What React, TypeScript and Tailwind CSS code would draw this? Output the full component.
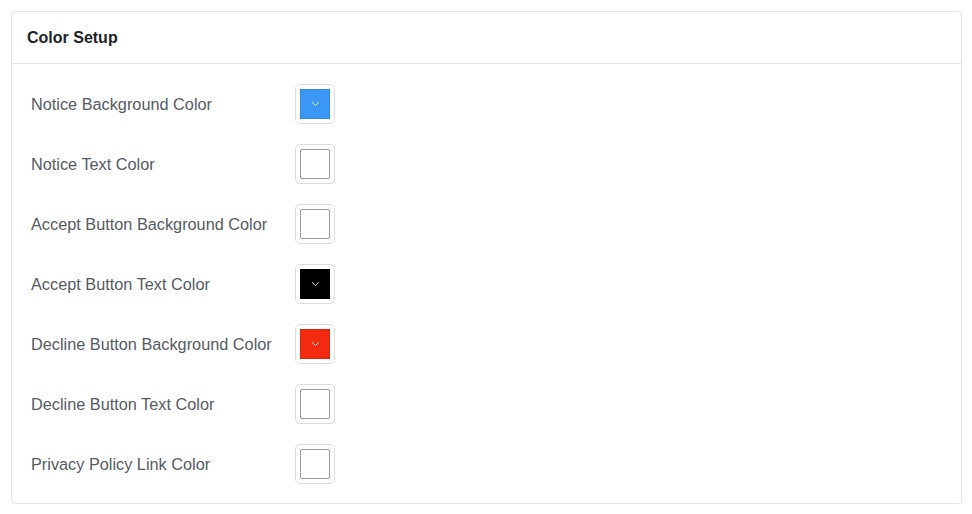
const rows = [
  { label: "Notice Background Color", color: "bg-[#3b97f5]", dark: true },
  { label: "Notice Text Color", color: "bg-white", dark: false },
  { label: "Accept Button Background Color", color: "bg-white", dark: false },
  { label: "Accept Button Text Color", color: "bg-black", dark: true },
  { label: "Decline Button Background Color", color: "bg-[#f12a10]", dark: true },
  { label: "Decline Button Text Color", color: "bg-white", dark: false },
  { label: "Privacy Policy Link Color", color: "bg-white", dark: false },
];

function Swatch({ color, dark }: { color: string; dark: boolean }) {
  return (
    <div className="w-[40px] h-[40px] rounded-[5px] border border-[#dcdcde] bg-white flex items-center justify-center">
      <div
        className={`w-[30px] h-[30px] flex items-center justify-center ${color} ${
          dark ? "border border-black/10" : "border border-[#9a9a9a] rounded-[2px]"
        }`}
      >
        {dark && (
          <svg width="9" height="6" viewBox="0 0 9 6" fill="none">
            <path d="M1 1.2 4.5 4.6 8 1.2" stroke="#ffffff" strokeWidth="1" strokeOpacity="0.85" />
          </svg>
        )}
      </div>
    </div>
  );
}

export default function App() {
  return (
    <div className="bg-white min-h-[514px] pt-[11px] pl-[11px] font-['Liberation_Sans',Arial,sans-serif]">
      <div className="w-[951px] h-[493px] border border-[#e2e4e7] rounded-[4px] bg-white">
        <div className="h-[52px] border-b border-[#e2e4e7] flex items-center px-[15px]">
          <h2 className="text-[16px] font-bold text-[#1d2327]">Color Setup</h2>
        </div>
        <div className="pt-[10px] px-[19px]">
          {rows.map((row) => (
            <div key={row.label} className="h-[60px] flex items-center">
              <span className="w-[264px] text-[16.3px] text-[#555b62]">{row.label}</span>
              <Swatch color={row.color} dark={row.dark} />
            </div>
          ))}
        </div>
      </div>
    </div>
  );
}
